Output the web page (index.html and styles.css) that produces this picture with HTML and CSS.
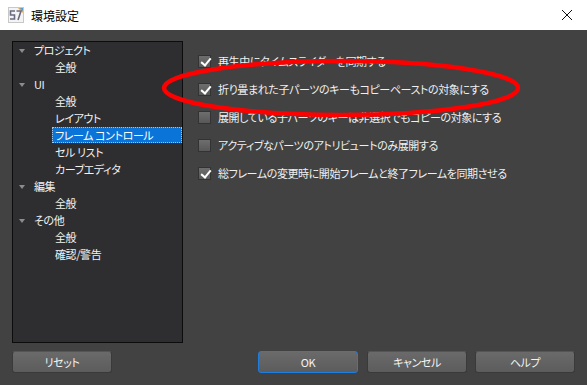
FILE: index.html
```html
<!DOCTYPE html>
<html lang="ja">
<head>
<meta charset="utf-8">
<title>環境設定</title>
<link rel="stylesheet" href="styles.css">
</head>
<body>
<div class="window">
  <div class="titlebar">
    <svg class="appicon" width="16" height="16" viewBox="0 0 16 16">
      <rect x="0.5" y="0.5" width="15" height="15" fill="#f4f4f4" stroke="#c8c8c8"/>
      <path d="M10 1 L15 1 L15 6 Z" fill="#f0a040"/>
      <path d="M12 1 L15 1 L15 4 Z" fill="#4aa0e0"/>
      <path d="M7 4 H2.5 V8 H6.5 V12 H2" fill="none" stroke="#6a6a80" stroke-width="1.6"/>
      <path d="M8.5 4 H13 L10 13" fill="none" stroke="#6a6a80" stroke-width="1.6"/>
    </svg>
    <span class="title">環境設定</span>
    <span class="close">
      <svg width="12" height="12" viewBox="0 0 12 12"><path d="M1 1 L11 11 M11 1 L1 11" stroke="#111" stroke-width="1"/></svg>
    </span>
  </div>
  <div class="body">
    <div class="content">
      <div class="tree">
        <div class="node parent"><span class="tri"></span>プロジェクト</div>
        <div class="node child">全般</div>
        <div class="node parent"><span class="tri"></span>UI</div>
        <div class="node child">全般</div>
        <div class="node child">レイアウト</div>
        <div class="node child selected">フレーム コントロール</div>
        <div class="node child">セル リスト</div>
        <div class="node child">カーブエディタ</div>
        <div class="node parent"><span class="tri"></span>編集</div>
        <div class="node child">全般</div>
        <div class="node parent"><span class="tri"></span>その他</div>
        <div class="node child">全般</div>
        <div class="node child">確認/警告</div>
      </div>
      <div class="options">
        <label class="opt"><span class="cb checked"></span>再生中にタイムスライダーを同期する</label>
        <label class="opt"><span class="cb checked"></span>折り畳まれた子パーツのキーもコピーペーストの対象にする</label>
        <label class="opt"><span class="cb"></span>展開している子パーツのキーは非選択でもコピーの対象にする</label>
        <label class="opt"><span class="cb"></span>アクティブなパーツのアトリビュートのみ展開する</label>
        <label class="opt"><span class="cb checked"></span>総フレームの変更時に開始フレームと終了フレームを同期させる</label>
      </div>
    </div>
    <div class="footer">
      <button class="btn">リセット</button>
      <span class="spacer"></span>
      <button class="btn default">OK</button>
      <button class="btn">キャンセル</button>
      <button class="btn">ヘルプ</button>
    </div>
  </div>
  <svg class="annot" width="587" height="385" viewBox="0 0 587 385">
    <ellipse cx="341" cy="88" rx="177" ry="27" fill="none" stroke="#ff0000" stroke-width="4.5"/>
  </svg>
</div>
</body>
</html>
```
FILE: styles.css
```css
* { box-sizing: border-box; }
html, body { margin: 0; padding: 0; }
body {
  width: 587px;
  height: 385px;
  overflow: hidden;
  font-family: "Noto Sans CJK JP", "Noto Sans", sans-serif;
  font-size: 11px;
  letter-spacing: -0.4px;
  font-feature-settings: "palt";
}
.window { position: relative; width: 587px; height: 385px; }
.titlebar {
  height: 30px;
  background: #ffffff;
  display: flex;
  align-items: center;
  padding-left: 8px;
  color: #000;
}
.appicon { display: block; }
.title { margin-left: 7px; font-size: 12px; letter-spacing: 0; }
.close { margin-left: auto; margin-right: 14px; display: flex; }
.body {
  height: 355px;
  background: #424242;
  padding: 11px 12px 0 12px;
  display: flex;
  flex-direction: column;
}
.content { display: flex; height: 302px; }
.tree {
  width: 171px;
  height: 302px;
  background: #2e2e30;
  border: 1px solid #0c0c0c;
  padding-top: 0;
  color: #f2f2f2;
}
.node {
  height: 17px;
  line-height: 17px;
  white-space: nowrap;
  display: flex;
  align-items: center;
}
.parent { padding-left: 6px; }
.tri {
  width: 0; height: 0;
  border-left: 3.5px solid transparent;
  border-right: 3.5px solid transparent;
  border-top: 4px solid #8c8c8c;
  margin-right: 9px;
  margin-top: 1px;
}
.child { padding-left: 42px; }
.selected {
  margin-left: 39px;
  padding-left: 3px;
  height: 16px;
  margin-bottom: 1px;
  background: #0a74d8;
  outline: 1px dotted #9cc8f0;
  outline-offset: -1px;
  color: #fff;
}
.options {
  margin-left: 15px;
  padding-top: 6px;
  color: #f0f0f0;
}
.opt {
  height: 28px;
  display: flex;
  align-items: center;
  white-space: nowrap;
}
.cb {
  width: 13px; height: 13px;
  border: 1px solid #333;
  background: linear-gradient(#6e6e6e, #585858);
  margin-right: 7px;
  position: relative;
  flex: none;
}
.cb.checked::after {
  content: "";
  position: absolute;
  left: 4px; top: 0px;
  width: 4px; height: 8px;
  border-right: 2px solid #fff;
  border-bottom: 2px solid #fff;
  transform: rotate(40deg);
}
.footer {
  margin-top: 8px;
  display: flex;
  align-items: center;
}
.spacer { flex: 1; }
.btn {
  width: 100px;
  height: 22px;
  margin-left: 8px;
  font-family: inherit;
  font-size: 11px;
  letter-spacing: -0.4px;
  font-feature-settings: "palt";
  color: #f4f4f4;
  background: linear-gradient(#6a6a6a, #5c5c5c);
  border: 1px solid #3a3a3a;
  border-top-color: #555;
  border-radius: 3px;
  padding: 0;
}
.footer .btn:first-child { margin-left: 0; }
.btn.default { border: 1px solid #1e7ee0; margin-right: 1px; }
.annot { position: absolute; left: 0; top: 0; pointer-events: none; }
```
